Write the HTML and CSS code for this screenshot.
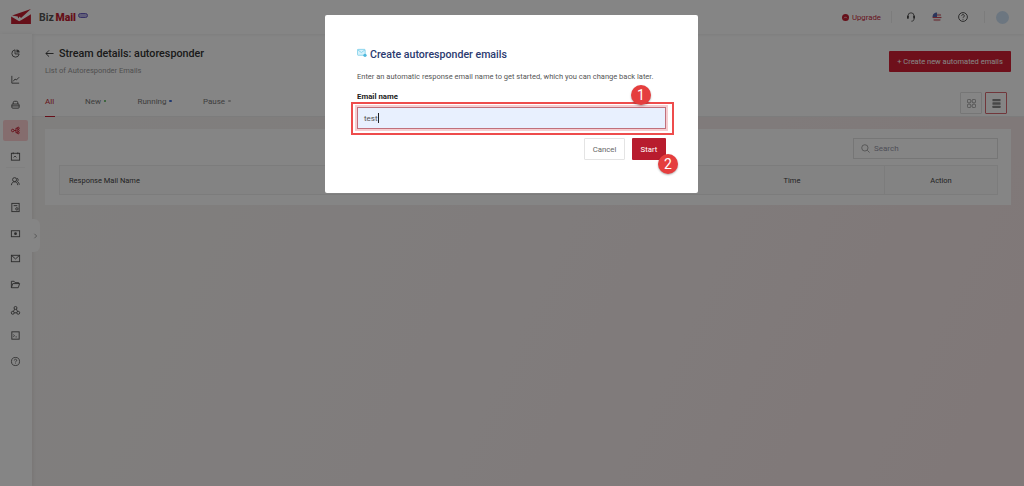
FILE: index.html
```html
<!DOCTYPE html>
<html lang="en">
<head>
    <meta charset="UTF-8">
    <meta name="viewport" content="width=device-width, initial-scale=1.0">
    <title>Biz Mail - Stream details</title>
    <link rel="stylesheet" href="styles.css">
</head>
<body>
    <header class="topbar">
        <div class="brand">
            <svg class="brand-logo" viewBox="0 0 22 17"><path d="M1 7L21 0 10.500 9.500 9 8 7.500 10 7 8z" fill="#c41e30"/><path d="M0 8l8.500 5 3-1.500L21 5.500V16H0z" fill="#c41e30"/></svg>
            <span class="brand-name">Biz <b>Mail</b></span>
            <span class="brand-badge"></span>
        </div>
        <div class="top-actions">
            <span class="upgrade-dot"><svg viewBox="0 0 8 8"><path d="M2.500 4.800L4 3.300l1.500 1.500" fill="none" stroke="#fff" stroke-width=".8"/></svg></span>
            <span class="upgrade">Upgrade</span>
            <span class="top-sep sep-first"></span>
            <svg class="top-icon" viewBox="0 0 12 12"><path d="M3 6V4.800a3 3 0 0 1 6 0V6" fill="none" stroke="#555" stroke-width=".9"/><rect x="2" y="4.600" width="1.800" height="3.200" rx=".9" fill="#444"/><rect x="8.200" y="4.600" width="1.800" height="3.200" rx=".9" fill="#444"/><path d="M9 8c0 1.500-1 2.200-2.600 2.200" fill="none" stroke="#555" stroke-width=".9"/></svg>
            <svg class="top-icon" viewBox="0 0 12 12"><circle cx="6" cy="6" r="4.500" fill="#eee"/><path d="M2 4h8M1.600 6.500h8.800M2.600 9h6.800" stroke="#d0485a" stroke-width="1.100"/><path d="M6 1.500A4.500 4.500 0 0 0 1.500 6H6z" fill="#5268b0"/></svg>
            <svg class="top-icon help" viewBox="0 0 12 12"><circle cx="6" cy="6" r="4.400" fill="none" stroke="#444" stroke-width=".9"/><path d="M4.700 4.800a1.300 1.300 0 1 1 2 1.100c-.5.3-.7.6-.7 1" fill="none" stroke="#444" stroke-width=".9"/><circle cx="6" cy="8.300" r=".5" fill="#444"/></svg>
            <span class="top-sep sep-last"></span>
            <span class="avatar"></span>
        </div>
    </header>

    <div class="shell">
        <nav class="sidebar">
            <a class="nav-item"><svg viewBox="0 0 12 12"><path d="M5.500 2a4 4 0 1 0 4.500 4.500H5.500z" fill="none" stroke="#555"/><path d="M7 1.500a3.500 3.500 0 0 1 3.500 3.500H7z" fill="#555"/></svg></a>
            <a class="nav-item"><svg viewBox="0 0 12 12"><path d="M2 2v8h8M3.500 8l2-2.500 1.500 1 3-3" fill="none" stroke="#555"/></svg></a>
            <a class="nav-item"><svg viewBox="0 0 12 12"><rect x="2" y="5.500" width="8" height="4.500" rx="1" fill="none" stroke="#555"/><path d="M3.500 5.500V4a1.500 1.500 0 0 1 1.500-1.500h2A1.500 1.500 0 0 1 8.500 4v1.500M2 7.500h8" fill="none" stroke="#555"/></svg></a>
            <a class="nav-item active"><svg viewBox="0 0 12 12"><circle cx="3" cy="6" r="1.400" fill="none" stroke="#c41e30"/><path d="M4.500 6h2M6.500 3.500v5h1.500M6.500 3.500h1.500" fill="none" stroke="#c41e30"/><circle cx="9" cy="3.500" r="1.100" fill="none" stroke="#c41e30"/><circle cx="9" cy="6" r="1.100" fill="none" stroke="#c41e30"/><circle cx="9" cy="8.500" r="1.100" fill="none" stroke="#c41e30"/></svg></a>
            <a class="nav-item nav-split"><svg viewBox="0 0 12 12"><rect x="1.500" y="2.500" width="9" height="7.500" fill="none" stroke="#555"/><path d="M3.500 1.500v2M8.500 1.500v2M4 7l1.500-1.500L7 7" fill="none" stroke="#555"/></svg></a>
            <a class="nav-item"><svg viewBox="0 0 12 12"><circle cx="5" cy="4" r="2.200" fill="none" stroke="#555"/><path d="M1.500 10c.3-2.500 1.500-3.700 3.500-3.700S8.200 7.500 8.500 10M7.500 2.500c1.500 0 2 2.500.5 3.500 1.200.5 2 2 2.200 3.500" fill="none" stroke="#555"/></svg></a>
            <a class="nav-item"><svg viewBox="0 0 12 12"><rect x="2" y="1.500" width="8" height="9" fill="none" stroke="#555"/><path d="M4 4h4" stroke="#555"/><circle cx="7.500" cy="7.500" r="1.300" fill="none" stroke="#555"/></svg></a>
            <a class="nav-item"><svg viewBox="0 0 12 12"><rect x="1.500" y="3" width="9" height="6.500" fill="none" stroke="#555"/><circle cx="6" cy="6.200" r="1.500" fill="#555"/></svg></a>
            <a class="nav-item"><svg viewBox="0 0 12 12"><rect x="1.500" y="2.500" width="9" height="7" fill="none" stroke="#555"/><path d="M1.500 2.500L6 6.500l4.500-4" fill="none" stroke="#555"/></svg></a>
            <a class="nav-item"><svg viewBox="0 0 12 12"><path d="M1.500 9.500v-7h3l1 1.500h4v1.500M1.500 9.500l1.500-4.500h7.500l-1.500 4.500z" fill="none" stroke="#555"/></svg></a>
            <a class="nav-item"><svg viewBox="0 0 12 12"><circle cx="6" cy="3.200" r="1.600" fill="none" stroke="#555"/><circle cx="3" cy="8.500" r="1.600" fill="none" stroke="#555"/><circle cx="9" cy="8.500" r="1.600" fill="none" stroke="#555"/><path d="M5 4.500L3.800 7M7 4.500L8.200 7M4.600 8.500h2.800" stroke="#555" fill="none"/></svg></a>
            <a class="nav-item"><svg viewBox="0 0 12 12"><rect x="2" y="2" width="8" height="8" fill="none" stroke="#555"/><path d="M3.500 5l1.500 1.200-1.500 1.200M6 7.500h1.500" fill="none" stroke="#555" stroke-width=".8"/></svg></a>
            <a class="nav-item"><svg viewBox="0 0 12 12"><circle cx="6" cy="6" r="4.400" fill="none" stroke="#555" stroke-width=".9"/><path d="M4.700 4.800a1.300 1.300 0 1 1 2 1.100c-.5.3-.7.6-.7 1" fill="none" stroke="#555" stroke-width=".9"/><circle cx="6" cy="8.300" r=".5" fill="#555"/></svg></a>
            <span class="nav-toggle"><svg viewBox="0 0 6 8"><path d="M1.500 1l3 3-3 3" fill="none" stroke="#888"/></svg></span>
        </nav>

        <main class="content">
            <div class="page-head">
                <div>
                    <h1 class="page-title">
                        <svg viewBox="0 0 10 10"><path d="M9.500 5H1M4.500 1.500L1 5l3.500 3.500" fill="none" stroke="#333"/></svg>
                        Stream details: autoresponder
                    </h1>
                    <p class="page-sub">List of Autoresponder Emails</p>
                </div>
                <button class="btn-create">+ Create new automated emails</button>
            </div>

            <div class="tabs">
                <a class="tab active">All</a>
                <a class="tab tab-new">New <i class="tab-dot dot-green"></i></a>
                <a class="tab tab-running">Running <i class="tab-dot dot-blue"></i></a>
                <a class="tab tab-pause">Pause <i class="tab-dot dot-grey"></i></a>
                <div class="view-toggle">
                    <span class="view-btn"><svg viewBox="0 0 10 10"><rect x="0.500" y="0.500" width="3.700" height="3.700" rx="1" fill="none" stroke="#999"/><rect x="5.800" y="0.500" width="3.700" height="3.700" rx="1" fill="none" stroke="#999"/><rect x="0.500" y="5.800" width="3.700" height="3.700" rx="1" fill="none" stroke="#999"/><rect x="5.800" y="5.800" width="3.700" height="3.700" rx="1" fill="none" stroke="#999"/></svg></span>
                    <span class="view-btn current"><svg viewBox="0 0 10 10"><rect x="0.500" y="0" width="9" height="2.600" rx=".6" fill="#888"/><rect x="0.500" y="3.700" width="9" height="2.600" rx=".6" fill="#888"/><rect x="0.500" y="7.400" width="9" height="2.600" rx=".6" fill="#888"/></svg></span>
                </div>
            </div>

            <section class="panel">
                <div class="panel-tools">
                    <label class="search">
                        <svg viewBox="0 0 10 10"><circle cx="4.300" cy="4.300" r="3.500" fill="none" stroke="#888" stroke-width=".8"/><path d="M7 7l2.500 2.500" stroke="#888" stroke-width=".8"/></svg>
                        Search
                    </label>
                </div>
                <div class="table-head">
                    <span class="col-name">Response Mail Name</span>
                    <span class="col-time">Time</span>
                    <span class="col-action">Action</span>
                </div>
            </section>
        </main>
    </div>

    <div class="overlay"></div>

    <div class="modal">
        <h2 class="modal-title">
            <svg viewBox="0 0 11 10"><rect x="0.500" y="1" width="8.500" height="6.500" rx=".8" fill="#d8f2fb" stroke="#6fcbe8" stroke-width=".8"/><path d="M.8 1.500l4 3 4-3" fill="none" stroke="#6fcbe8" stroke-width=".8"/><circle cx="8.800" cy="7.600" r="1.800" fill="#4fb8dd"/></svg>
            Create autoresponder emails
        </h2>
        <p class="modal-text">Enter an automatic response email name to get started, which you can change back later.</p>
        <label class="field-label">Email name</label>
        <div class="field-input">test<span class="caret"></span></div>
        <div class="modal-actions">
            <button class="btn-cancel">Cancel</button>
            <button class="btn-start">Start</button>
        </div>
    </div>

    <span class="mark-box"></span>
    <span class="mark mark-one">1</span>
    <span class="mark mark-two">2</span>
</body>
</html>
```

FILE: styles.css
```css
* {
    box-sizing: border-box;
}

html, body {
    height: 100%;
}

body {
    margin: 0;
    overflow: hidden;
    font-family: Roboto, "Liberation Sans", sans-serif;
    color: #333;
    background: #fff;
    display: flex;
    flex-direction: column;
}

.topbar {
    height: 34px;
    flex: none;
    display: flex;
    align-items: center;
    justify-content: space-between;
    background: #fff;
    box-shadow: 0 1px 3px rgba(0, 0, 0, 0.06);
    position: relative;
    z-index: 1;
}

.brand {
    display: flex;
    align-items: center;
    padding-left: 11px;
}

.brand-logo {
    width: 21px;
    height: 16px;
}

.brand-name {
    margin-left: 7px;
    font-size: 10.500px;
    font-weight: 700;
    color: #555;
    word-spacing: -1px;
}

.brand-name b {
    color: #c41e30;
}

.brand-badge {
    width: 10px;
    height: 5px;
    margin: -4px 0 0 2px;
    border-radius: 3px;
    border: 1.500px solid #6a5fc0;
    background: #b9b3e6;
}

.top-actions {
    display: flex;
    align-items: center;
    padding-right: 15px;
}

.upgrade-dot {
    display: flex;
    width: 7px;
    height: 7px;
    border-radius: 50%;
    background: #c41e30;
}

.upgrade {
    margin-left: 3px;
    font-size: 7.800px;
    color: #c8283c;
}

.top-sep {
    width: 1px;
    height: 12px;
    background: #eee;
}

.sep-first {
    margin: 0 13px 0 10px;
}

.sep-last {
    margin: 0 11px 0 15px;
}

.top-icon {
    width: 12px;
    height: 12px;
    margin-right: 14px;
}

.top-icon.help {
    margin-right: 0;
}

.avatar {
    width: 13px;
    height: 13px;
    border-radius: 50%;
    background: #cfe3f5;
}

.shell {
    flex: 1;
    display: flex;
    min-height: 0;
}

.sidebar {
    width: 32px;
    flex: none;
    padding-top: 9px;
    background: #fff;
    box-shadow: 1px 0 4px rgba(0, 0, 0, 0.08);
    position: relative;
    z-index: 1;
}

.nav-item {
    display: flex;
    align-items: center;
    justify-content: center;
    width: 25px;
    height: 21px;
    margin: 0 0 4.670px 3px;
    border-radius: 2px;
}

.nav-item svg {
    width: 11px;
    height: 11px;
}

.nav-item.active {
    background: #ffd2d4;
}

.nav-split {
    box-shadow: 0 3.500px 0 -3px #eee;
}

.nav-toggle {
    position: absolute;
    left: 32px;
    top: 185px;
    width: 8px;
    height: 33px;
    display: flex;
    align-items: center;
    border-radius: 0 6px 6px 0;
    background: #fff;
}

.nav-toggle svg {
    width: 5px;
    height: 6px;
    margin-left: 1px;
}

.content {
    flex: 1;
    min-width: 0;
    background: linear-gradient(115deg, #f6f4f2 0, #f6eeee 45%, #f6e6e6 100%);
}

.page-head {
    height: 46px;
    display: flex;
    justify-content: space-between;
    align-items: flex-start;
    padding: 12px 13px 0 13px;
    background: #fff;
}

.page-title {
    display: flex;
    align-items: center;
    gap: 5px;
    margin: 0;
    height: 14px;
    font-size: 10.750px;
    font-weight: 500;
    color: #333;
}

.page-title svg {
    width: 9px;
    height: 9px;
}

.page-sub {
    margin: 6px 0 0;
    font-size: 7.500px;
    color: #999;
}

.btn-create {
    height: 21px;
    width: 122px;
    margin-top: 5px;
    padding: 0;
    border: none;
    border-radius: 1px;
    font-family: inherit;
    font-size: 7.500px;
    color: #fff;
    background: #d41f35;
}

.tabs {
    height: 37px;
    display: flex;
    align-items: flex-end;
    padding: 0 17px 0 13px;
    background: #fff;
    border-bottom: 1px solid #eee;
}

.tab {
    padding-bottom: 9px;
    font-size: 8px;
    line-height: 10px;
    color: #777;
}

.tab.active {
    width: 10px;
    color: #c41e30;
    box-shadow: 0 1px 0 #c41e30;
}

.tab-new {
    margin-left: 30px;
}

.tab-running {
    margin-left: 31px;
}

.tab-pause {
    margin-left: 31px;
}

.tab-dot {
    display: inline-block;
    width: 2.500px;
    height: 2.500px;
    margin: 0 0 2px 1px;
    border-radius: 50%;
}

.dot-green {
    background: #4caf50;
}

.dot-blue {
    background: #3f6fd8;
}

.dot-grey {
    background: #bbb;
}

.view-toggle {
    display: flex;
    gap: 3px;
    margin-left: auto;
    align-self: flex-start;
    padding-top: 12px;
}

.view-btn {
    width: 22px;
    height: 22px;
    display: flex;
    align-items: center;
    justify-content: center;
    border: 1px solid #e2e2e2;
    border-radius: 1px;
}

.view-btn.current {
    border-color: #d86a72;
}

.view-btn svg {
    width: 9px;
    height: 9px;
}

.panel {
    margin: 12px 13px 0 13px;
    height: 76px;
    padding: 9px 13px 0 14px;
    background: #fff;
}

.panel-tools {
    display: flex;
    justify-content: flex-end;
}

.search {
    width: 145px;
    height: 21px;
    display: flex;
    align-items: center;
    gap: 4px;
    padding-left: 7px;
    border: 1px solid #e2e2e2;
    font-size: 8px;
    color: #99a;
}

.search svg {
    width: 9px;
    height: 9px;
}

.table-head {
    height: 30px;
    margin-top: 6px;
    display: grid;
    grid-template-columns: 1fr 184px 113px;
    align-items: center;
    background: #fbfbfb;
    border: 1px solid #eee;
    font-size: 7.500px;
    color: #444;
}

.col-name {
    padding-left: 9px;
}

.col-time,
.col-action {
    height: 100%;
    display: flex;
    align-items: center;
    justify-content: center;
}

.col-action {
    border-left: 1px solid #eee;
}

.overlay {
    position: fixed;
    inset: 0;
    z-index: 5;
    background: rgba(0, 0, 0, 0.48);
}

.modal {
    position: fixed;
    left: 325px;
    top: 15px;
    z-index: 6;
    width: 373px;
    height: 178px;
    padding: 33px 32px 0;
    border-radius: 2px;
    background: #fff;
}

.modal-title {
    display: flex;
    align-items: center;
    gap: 3px;
    margin: 0;
    height: 13px;
    font-size: 10.600px;
    font-weight: 500;
    color: #2b3a6f;
}

.modal-title svg {
    width: 10px;
    height: 10px;
    margin-top: -3px;
}

.modal-text {
    margin: 10px 0 0;
    font-size: 7.500px;
    line-height: 12px;
    color: #555;
    white-space: nowrap;
}

.field-label {
    display: block;
    margin-top: 9px;
    font-size: 7.800px;
    line-height: 10px;
    font-weight: 700;
    color: #222;
}

.field-input {
    height: 22px;
    width: 309px;
    margin-top: 5px;
    display: flex;
    align-items: center;
    padding-left: 6px;
    border: 1px solid #c0707c;
    box-shadow: 0 0 0 2px #f6cdd0;
    font-size: 8px;
    color: #555;
    background: #e8f0fe;
}

.caret {
    width: 1px;
    height: 10px;
    background: #222;
}

.modal-actions {
    display: flex;
    justify-content: flex-end;
    gap: 7px;
    width: 309px;
    margin-top: 9px;
}

.btn-cancel,
.btn-start {
    height: 22px;
    padding: 0;
    border-radius: 1px;
    font-family: inherit;
    font-size: 7.800px;
}

.btn-cancel {
    width: 41px;
    color: #666;
    background: #fff;
    border: 1px solid #e4e4e4;
}

.btn-start {
    width: 34px;
    color: #fff;
    background: #b81c2e;
    border: none;
}

.mark-box {
    position: fixed;
    left: 351px;
    top: 102px;
    z-index: 7;
    width: 323px;
    height: 33px;
    border: 2px solid #ee4c4c;
}

.mark {
    position: fixed;
    z-index: 8;
    width: 20px;
    height: 20px;
    display: flex;
    align-items: center;
    justify-content: center;
    border-radius: 50%;
    font-size: 14px;
    color: #fff;
    background: #e53e3e;
    box-shadow: 0 1px 2px rgba(0, 0, 0, 0.3);
}

.mark-one {
    left: 631px;
    top: 85px;
}

.mark-two {
    left: 658px;
    top: 154px;
}
```
